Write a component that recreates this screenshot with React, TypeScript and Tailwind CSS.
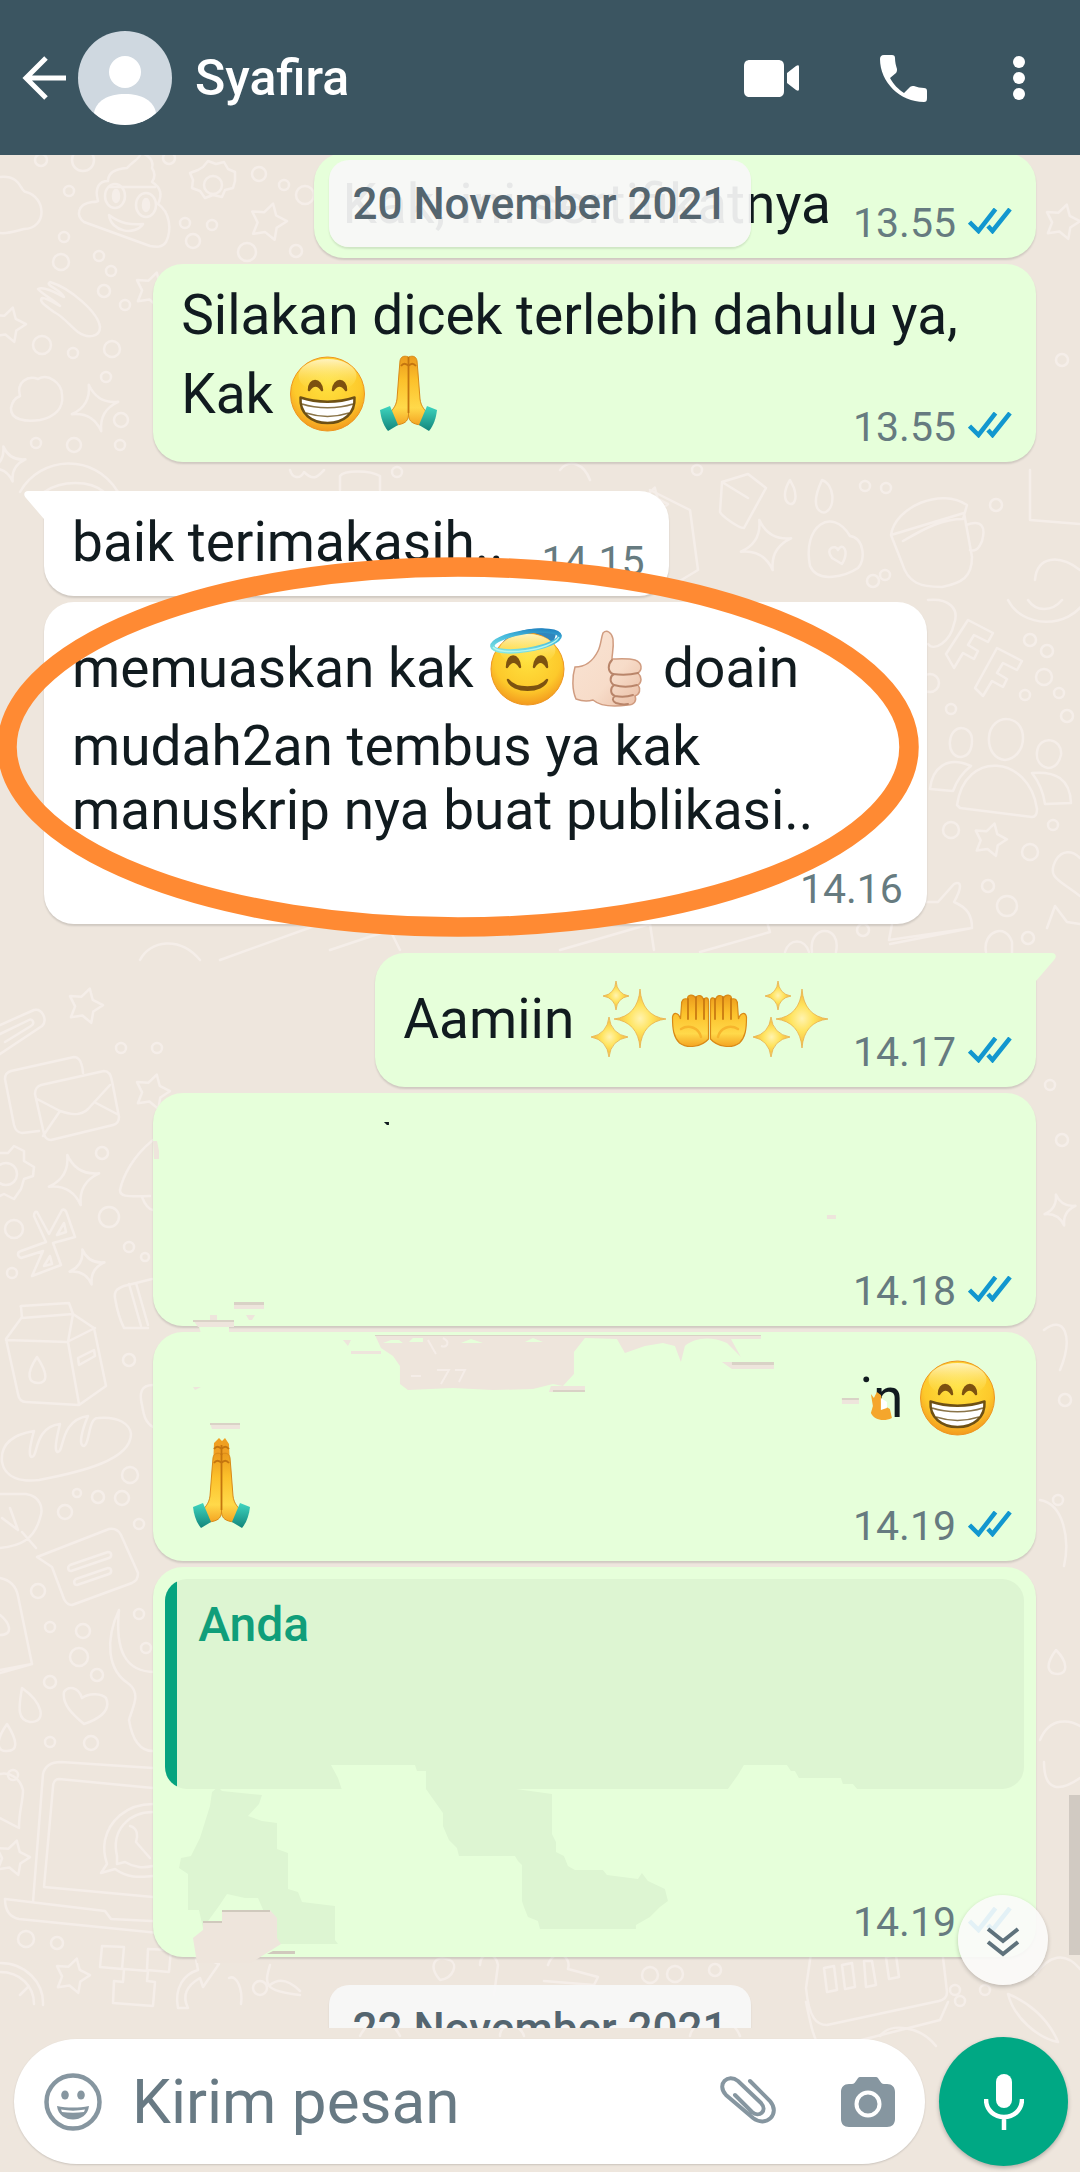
import type { ReactNode } from 'react';

const stars = [
  [268, 222, 19], [8, 325, 18], [85, 1006, 18], [152, 1092, 18], [990, 840, 17], [12, 1858, 18], [72, 1976, 18],
  [152, 290, 18], [1062, 222, 18], [650, 505, 18],
];

const sparkles = [
  [95, 408, 24], [74, 1180, 26], [87, 1267, 18], [766, 545, 26], [8, 464, 18], [905, 1010, 14], [1060, 1210, 16],
];

const circles = [
  [41, 160, 6], [83, 160, 11], [169, 158, 6], [69, 191, 5], [64, 237, 5], [185, 223, 5], [212, 225, 5], [193, 241, 7],
  [259, 174, 7], [284, 185, 5], [305, 195, 9], [247, 252, 9], [296, 251, 6], [61, 262, 8], [99, 256, 5], [111, 271, 5],
  [104, 291, 6], [125, 305, 5], [42, 345, 9], [73, 353, 5], [112, 349, 8], [106, 377, 5], [121, 420, 7], [74, 445, 7],
  [36, 443, 5], [120, 445, 5], [121, 1048, 5], [157, 1048, 5], [102, 1153, 6], [109, 1217, 10], [14, 1229, 9],
  [129, 1247, 5], [145, 1257, 4], [12, 1273, 5], [129, 1360, 6], [130, 1475, 8], [77, 1493, 4], [98, 1497, 6],
  [122, 1498, 7], [65, 1512, 7], [139, 1524, 5], [38, 1591, 7], [50, 1627, 5], [83, 1631, 7], [139, 1614, 5],
  [79, 1657, 9], [97, 1675, 6], [50, 1682, 6], [146, 1648, 5], [50, 1742, 5], [91, 1743, 7], [26, 1939, 8],
  [57, 1943, 6], [260, 1988, 7], [1030, 640, 6], [1047, 651, 6], [1044, 677, 8], [1025, 695, 5], [1059, 693, 5],
  [1067, 716, 6], [951, 709, 5], [930, 683, 9], [951, 830, 8], [1053, 825, 5], [1030, 852, 8], [988, 886, 6],
  [1007, 906, 10], [1028, 938, 6], [863, 930, 6], [397, 472, 5], [697, 470, 5], [865, 486, 5], [886, 488, 5],
  [996, 505, 6], [873, 581, 6], [885, 575, 5], [1062, 1140, 6], [1050, 1085, 5], [1062, 360, 6], [1065, 1400, 6],
  [1058, 1500, 5], [650, 1975, 8], [675, 1974, 8], [715, 1970, 6], [955, 1990, 5], [985, 1990, 5], [960, 2001, 5],
];

const doodles = [
  // cloud and poo
  'M0 177c22-2 20 15 26 15 20 5 22 36-2 37-8 2-16 5-24 4',
  'M127 168c5-6 12-8 14-15 8 2 13 8 11 15 4 6 3 10 0 14 10 6 10 14 6 22 12 8 14 26 8 38-4 6-10 5-16 4l-66-24c-8-6-7-18 8-20 2 0 5 0 6-1-4-14 2-20 10-20 0-8 6-12 19-13zM109 215c12 9 22 10 34 9-8 12-32 8-34-9zM110 187h45',
  // gear
  'M203 167l5-6 8 3 8-2 4 7 7 3v9l-2 7-8 2-3 7-9-2-8 3-5-7-8-3 1-8-3-7 8-3z',
  'M222 185a9 9 0 1 1-18 0 9 9 0 0 1 18 0z',
  // hand
  'M38 289c8-4 24 8 26 8-4-8-20-12-14-15 20 6 48 30 50 45 0 10-12 12-22 5-8-6-14-15-24-20-6-5-16-10-12-14 6 0 14 6 18 8-6-6-18-12-22-17z',
  // flower
  'M20 396c-4-14 8-21 18-17 10-6 24 4 24 16 2 14-8 22-22 25-14 2-30 0-29-12 1-6 4-10 9-12z',
  // dome
  'M20 492c20-36 74-40 98 0M44 492c18-12 46-12 60 0',
  // paperclip and envelopes
  'M0 1025l34-15c8-2 14 10 8 16L0 1054M5 1042l26-16c4-2 2-8-2-6L0 1034',
  'M39 1131l-17 2c-4 0-7-4-8-8l-9-46c0-5 2-7 6-8l63-14c5 0 8 4 9 16',
  'M41 1085l63-14c4 0 7 4 8 10l7 36c0 4-2 7-6 8l-62 15c-4 0-6-2-7-6l-9-40c0-4 2-8 6-9zM37 1099l23 12c14 5 22 4 28-2l22-24M60 1111l-17 25M96 1103l21 11',
  // gear on the edge
  'M0 1153l8 0 6-7 10 5 0 10 10 6-1 9-9 3-3 10-7 10-10-5-4 2M17 1174a11 11 0 1 1-22 0 11 11 0 0 1 22 0',
  // ribbon
  'M37 1212l12 22 13-24c2-1 4 0 5 4l8 23-22 6 8 22-29 11 11-25-22 7c-4-2-4-6 0-7l25-9-12-26c0-4 2-5 3-4zM57 1235l7-12 2 9zM44 1266l6-10 2 8z',
  // rocket
  'M153 1140c-20 16-30 36-33 50 0 6 4 7 30 6M142 1197c3 8 6 12 11 13',
  // milk carton
  'M21 1307c-1-1 0-1 0-1l48-3 4 11-51 4zM22 1317l-16 22 12 55c1 6 4 8 8 8l53 3 27-19-12-58-21-14-5 28 11 62M6 1340l61 2 28-14M78 1358l16-8 1 6-16 9zM37 1357c-12 18-8 26 1 26s11-8-1-26z',
  'M152 1279l-28 7c-8 3-10 6-9 12 2 12 4 20 9 30l24 0M129 1284l12 42M136 1283l12 42M153 1385c-12 0-14 8-11 20 2 12 4 18 11 22',
  // bread
  'M2 1462c-2-20 14-28 32-31-4 14-6 26-2 26 6 0 2-30 28-33-4 16-6 28-2 28 6 0 2-32 30-36-6 14-10 30-4 30 6-2 4-28 14-28 20-2 32 6 33 16 0 26-50 38-92 46-18 2-34-2-37-18z',
  // racket and chat note
  'M0 1494h26c14 2 18 14 14 24-6 22-20 28-40 30M22 1532l14 16M10 1508l8 22M2 1518l16 12',
  'M37 1557l72-28c6-1 10 2 12 6l17 38c0 6-2 8-6 10l-60 22c-4 0-6-2-8-6l-12-32zM70 1565l38-13c4 0 4 5 1 6l-38 13c-3 0-4-4-1-6zM76 1579l32-11c4 0 4 5 1 6l-32 11c-3 0-4-4-1-6z',
  'M0 1578c10 2 16 8 18 18l14 68-32 9M32 1664l-32 6M0 1615c10 8 14 20 0 20',
  // bottle, heart and drops
  'M119 1610c-14 30-12 60 10 74 12 10 4 22 0 36 4 24 14 32 26 31M119 1610c-4 40 6 62 36 62',
  'M84 1724c-12-10-22-20-20-32 4-6 14-6 18 6 8-6 20-4 24 0 6 14-10 22-22 26zM22 1688c-4 22-4 32 8 34 18 0 12-20-8-34zM7 1724c-14 20-8 28 0 27 10 0 12-8 0-27z',
  'M0 1774c10-2 20 4 23 16 0 12-4 20-4 38L0 1818M18 1775a5 5 0 1 1-10 0 5 5 0 0 1 10 0',
  // laptop
  'M153 1768l-92-6c-10 0-16 4-18 12l-10 128M153 1788l-94-9c-4 0-6 4-6 8l-9 100 109 10M5 1899l100 12 6 8 160 8M5 1899c0 10 4 18 14 20l240 24c8 0 12-4 12-16',
  'M153 1804c-28 0-44 18-48 36-2 10 0 18 2 24l-6 9 14-4c14 10 26 8 38 7M153 1812c-24 0-42 18-36 44l0 8 8-2c10 6 18 6 28 4M130 1826c8 2 8 10 6 16l14 16',
  // pixels and arrow
  'M102 1946l22 1-2 22-22-2zM148 1949l23 1-2 22-22-2zM124 1969l24 2-1 10 8 1-2 24-40-3 1-22 9 1zM195 1953l24 11-16 23-3-9c-14 8-18 18-12 30l-10 0c-4-20 6-34 20-38zM229 1978c8-4 14 12 12 26',
  'M0 1963c26 0 44 20 43 42M0 1972c20 0 34 14 34 32M20 1995l8-8',
  // people
  'M972 740c0 10-4 16-11 17-8 0-12-8-11-16 2-18 22-16 22-1zM1023 738c0 12-8 21-18 22-10-1-17-10-16-23 2-24 34-24 34 1zM1061 755c-2 8-6 13-13 13-8-2-12-8-11-16 2-18 26-14 24 3z',
  'M957 805c8-56 72-50 80 4 0 6-2 8-5 8l-72-9zM930 789c2-20 16-34 41-23-8 6-14 14-18 25zM1032 773c24-2 38 6 39 30l-26 1c-2-14-6-22-13-31z',
  // banner and mushroom shapes
  'M946 654l22-34 25 13-5 9-14-7-6 10 10 6-4 8-11-6-9 15zM975 688l22-40 25 13-5 9-14-7-6 10 10 6-4 8-11-6-9 15z',
  'M928 600c20-2 32 8 26 24-4 18-20 28-26 20M1008 600c14 28 60 30 78 0M1028 600c8 12 24 12 34 0',
  // robot and tag
  'M889 940l3-16c6-14 20-20 34-22l12 0 16-18c8-4 8 4 0 18 14 6 18 14 18 26zM890 944l82-16M986 952c-4-20 20-30 26-10v12M1047 928l8-22 12 16 13 2M1056 860c6-10 16-10 24-2M1056 860c-10 18 4 20 24 36',
  'M785 952c4-14 20-14 24 0M812 952c-4-28 30-28 24 0M700 952l70-20-6-20M140 960c10-20 40-24 60 0M220 960l100-36M330 950l60-20 10 20M560 950l90-26 4 26',
  // cups and pills
  'M891 535l73-22 8 44c0 20-10 26-30 30-22 0-34-4-40-24zM891 535c4-28 50-48 76-30l-4 14c-20 0-36 8-60 22M966 525c16-6 20 2 16 16-4 10-8 10-12 9',
  'M810 566c-8-40 22-60 40-30 14 2 16 24 8 32-12 8-40 16-48-2zM832 558c-8-10 4-14 6-8 4-8 12 0 4 14zM722 482l26-8 18 14-22 40c-6 0-22-12-24-16zM722 482l26 16M790 480c-16 26 12 34 4 8zM822 480c-14 30 0 34 4 32 10-6 8-28-4-32z',
  'M650 490l40 20 8 60-40 24M1030 470v50l50 4M1035 580c2-24 24-26 45-10M560 470c10-12 24-6 30 10M340 490v-14c4-6 30-6 40 0v14M290 470c2 8 10 10 14 2 10 10 14 4 20-2',
  'M440 1980c-12-14-6-26 10-20 8 4 4 18-10 20zM480 1965c0-14 16-14 18 0l-4 30M548 1965c6-18 24-10 20 4l30 8-4 8-50-4',
  // clock radio
  'M806 1988l4-28c0-6 6-10 14-12l100-18c8 0 14 4 17 10l6 52c0 6-4 8-8 9l-112 24c-10 0-18-6-21-37zM824 1968l10-2 3 24-10 2zM842 1965l10-2 3 24-10 2zM864 1961h8l4 24-10 2zM886 1957l10-2 3 22-10 2zM806 2002c4 20 8 40 16 48l118-30 8-18',
  'M1008 1994c20 8 40 24 50 48-20-4-44-24-50-48M1035 1975c14-20 30-24 45-6M1044 1330c20-16 30 6 16 40M1040 1500c24 4 30 40 24 66M1056 1650c-12 16-8 24 2 24s10-12-2-24zM1040 1740c10-24 30-20 40-14M1044 1762c0 30 16 30 36 16',
  'M270 1965c-6 20-6 26 30 30M270 1985c12-10 24 0 30 6M360 2036c10-20 30-20 40 0M500 2036c0-14 20-14 24 0M690 2036c4-20 40-26 50 0M880 2036c10-14 40-10 56 10',
];

function starPath(cx: number, cy: number, r: number) {
  const points = Array.from({ length: 10 }, (_, i) => {
    const a = (i * Math.PI) / 5 - 1.3;
    const d = i % 2 ? r * 0.55 : r;
    return `${(cx + d * Math.cos(a)).toFixed(1)} ${(cy + d * Math.sin(a)).toFixed(1)}`;
  });
  return `M${points.join('L')}Z`;
}

function sparkPath(cx: number, cy: number, r: number) {
  const k = r * 0.14;
  return `M${cx} ${cy - r}Q${cx + k} ${cy - k} ${cx + r} ${cy}Q${cx + k} ${cy + k} ${cx} ${cy + r}Q${cx - k} ${cy + k} ${cx - r} ${cy}Q${cx - k} ${cy - k} ${cx} ${cy - r}Z`;
}

function Wallpaper() {
  return (
    <svg
      viewBox="0 0 1080 2172"
      preserveAspectRatio="xMidYMin slice"
      className="absolute inset-0 -z-10 h-full w-full"
      fill="none"
      stroke="#f5eee9"
      strokeWidth="2.5"
      strokeLinejoin="round"
      strokeLinecap="round"
      aria-hidden="true"
    >
      {doodles.map((d) => <path key={d} d={d} />)}
      {circles.map(([x, y, r]) => <circle key={`${x}-${y}`} cx={x} cy={y} r={r} />)}
      {stars.map(([x, y, r]) => <path key={`${x}-${y}`} d={starPath(x, y, r)} />)}
      {sparkles.map(([x, y, r]) => <path key={`${x}-${y}`} d={sparkPath(x, y, r)} transform={`rotate(-15 ${x} ${y})`} />)}
      <ellipse cx="115" cy="196" rx="10" ry="12" />
      <ellipse cx="146" cy="205" rx="10" ry="12" />
      <ellipse cx="116" cy="196" rx="3" ry="6" fill="#f5eee9" />
      <ellipse cx="146" cy="205" rx="3" ry="6" fill="#f5eee9" />
    </svg>
  );
}

function Gradients() {
  return (
    <svg className="absolute h-0 w-0" aria-hidden="true">
      <defs>
        <radialGradient id="face" cx="0.5" cy="0.35" r="0.65">
          <stop offset="0" stopColor="#ffe23f" />
          <stop offset="0.7" stopColor="#fdc92b" />
          <stop offset="1" stopColor="#f39a1e" />
        </radialGradient>
        <linearGradient id="shine" x1="0" y1="0" x2="0" y2="1">
          <stop offset="0" stopColor="#fff6cf" stopOpacity="0.9" />
          <stop offset="1" stopColor="#ffe23f" stopOpacity="0" />
        </linearGradient>
        <linearGradient id="skin" x1="0" y1="0" x2="0" y2="1">
          <stop offset="0" stopColor="#eb9a1c" />
          <stop offset="0.35" stopColor="#fcc12b" />
          <stop offset="0.75" stopColor="#ffd94a" />
          <stop offset="1" stopColor="#f4a422" />
        </linearGradient>
        <linearGradient id="pale" x1="0" y1="0" x2="1" y2="1">
          <stop offset="0" stopColor="#f9e3d3" />
          <stop offset="0.6" stopColor="#f7dcc9" />
          <stop offset="1" stopColor="#e9bda4" />
        </linearGradient>
        <linearGradient id="cuff" x1="0" y1="0" x2="0" y2="1">
          <stop offset="0" stopColor="#3fd6c0" />
          <stop offset="1" stopColor="#13857b" />
        </linearGradient>
        <radialGradient id="spark">
          <stop offset="0" stopColor="#fff3b0" />
          <stop offset="0.45" stopColor="#ffe35c" />
          <stop offset="1" stopColor="#f2b33c" />
        </radialGradient>
        <linearGradient id="halo" x1="0" y1="1" x2="1" y2="0">
          <stop offset="0" stopColor="#8ff0e4" />
          <stop offset="0.6" stopColor="#45b9dc" />
          <stop offset="1" stopColor="#1672b8" />
        </linearGradient>
      </defs>
    </svg>
  );
}

function Emoji({ label, children }: { label: string; children: ReactNode }) {
  return (
    <svg
      viewBox="0 0 81 76"
      role="img"
      aria-label={label}
      className="mt-[9px] mb-2 inline-block h-[76px] w-[81px] overflow-visible align-[-27px]"
    >
      {children}
    </svg>
  );
}

function Grin() {
  return (
    <Emoji label="grinning face">
      <circle cx="40.5" cy="38" r="37" fill="url(#face)" stroke="#ee9620" />
      <ellipse cx="40.5" cy="20" rx="29" ry="17" fill="url(#shine)" />
      <path d="M22 34c0-12 12-12 13 0-4-6-9-6-13 0zM46 34c1-12 13-12 13 0-4-6-9-6-13 0z" fill="#7d5210" stroke="#7d5210" strokeWidth="2.5" strokeLinejoin="round" />
      <path d="M13.5 41.5c16 5.5 38 5.5 54 0 1 16-11 25.5-27 25.5s-28-9.500-27-25.5z" fill="#fff" />
      <path d="M15 48c15 5 36 5 51 0M19 57c14 4.5 29 4.5 43 0" fill="none" stroke="#8a7448" strokeWidth="1.6" />
      <path d="M13.5 41.5c16 5.5 38 5.5 54 0 1 16-11 25.5-27 25.5s-28-9.500-27-25.5z" fill="none" stroke="#6e5014" strokeWidth="2.5" strokeLinejoin="round" />
    </Emoji>
  );
}

function Pray({ tall = false }: { tall?: boolean }) {
  return (
    <Emoji label="folded hands">
      {tall && <path d="M32 14l1-24 5-5 3 3 3-3 4 6 1 23z" fill="#f0a022" />}
      <path d="M40.5 1c-5-2-8 0-8.5 4l-1 12-2 26c-1 8-5 11-9 16l8 10c8-1 12-3 12.5-10z" fill="url(#skin)" stroke="#d98a17" />
      <path d="M40.5 1c5-2 8 0 8.5 4l1 12 2 26c1 8 5 11 9 16l-8 10c-8-1-12-3-12.5-10z" fill="url(#skin)" stroke="#d98a17" />
      <path d="M33 10c2-3 5-3 7.5 0 2.5-3 5-3 7.5 0M40.5 1v56" fill="none" stroke="#c4750f" strokeWidth="1.8" />
      {tall && <path d="M33-4c2-3 5-3 7.5 0 2.5-3 5-3 7.5 0M40.5-8v10" fill="none" stroke="#c4750f" strokeWidth="1.8" />}
      <path d="M12 54l10-4 8 19-10 6c-5-6-7-13-8-21z" fill="url(#cuff)" />
      <path d="M69 54l-10-4-8 19 10 6c5-6 7-13 8-21z" fill="url(#cuff)" />
    </Emoji>
  );
}

function Halo() {
  return (
    <Emoji label="smiling face with halo">
      <path d="M16 12C26-2 60-6 69 4L66 14 18 22z" fill="#2f86bd" />
      <ellipse cx="40.5" cy="39" rx="36.5" ry="36" fill="url(#face)" stroke="#ee9620" />
      <ellipse cx="40.5" cy="20" rx="28" ry="16" fill="url(#shine)" />
      <path d="M20 37c0-14 12-14 13 0-4-7-9-7-13 0zM47 37c1-14 13-14 13 0-4-7-9-7-13 0z" fill="#7d5210" stroke="#7d5210" strokeWidth="2.5" strokeLinejoin="round" />
      <path d="M21 50c8 10 31 10 39 0-4 13-35 13-39 0z" fill="#7d5210" stroke="#7d5210" strokeWidth="2.5" strokeLinejoin="round" />
      <ellipse cx="39" cy="11" rx="34" ry="9" fill="none" stroke="url(#halo)" strokeWidth="4.5" transform="rotate(-9 39 11)" />
      <path d="M6 17c6 9 58 4 66-10" fill="none" stroke="#b5f5ee" strokeWidth="1.5" />
    </Emoji>
  );
}

function ThumbsUp() {
  return (
    <Emoji label="thumbs up">
      <path d="M7 37c10 0 18-6 23-16 3-6 3-13 5-18 4-4 9 0 10 6 1 9-1 15-1 20 5 0 16-1 23 1 8 3 7 10 3 13 4 4 4 9 0 12 3 4 2 9-3 11 2 5-1 9-7 9-14 2-28 1-35-5-6 2-12 1-17-1-4-9-4-22-1-32z" fill="url(#pale)" stroke="#d09c80" strokeWidth="1.5" />
      <path d="M70 43c-8 2-18 2-25 1-6-3-5-10-1-14M69 55c-7 2-16 2-23 0-5-3-4-9 0-11M65 65c-6 2-12 2-18 1-5-2-5-8-1-11M60 74c-5 1-9 0-12-1-4-2-4-5-1-7" fill="none" stroke="#b9856a" strokeWidth="2" strokeLinecap="round" />
    </Emoji>
  );
}

function Sparkles() {
  return (
    <Emoji label="sparkles">
      <g fill="url(#spark)" stroke="#eab04a" strokeWidth="0.8">
        <path d="M52 8q2 27 26 30-24 3-26 29-2-26-26-29 24-3 26-30z" />
        <path d="M28 0q1 13 13 15-12 2-13 14-1-12-13-14 12-2 13-15z" />
        <path d="M21 36q2 17 19 20-17 3-19 20-2-17-18-20 16-3 18-20z" />
      </g>
    </Emoji>
  );
}

function Palms() {
  const hand = 'M39.5 28v-8c0-4-4-4-5-1-1-5-6-6-8-2-2-4-8-4-8 1-4-1-6 1-6 6l-1 14c-2-7-7-7-8-2 0 12 1 20 7 26 8 6 22 4 29-4z';
  return (
    <Emoji label="palms up together">
      <g stroke="#d98a17" strokeWidth="1.2">
        <path d={hand} fill="url(#skin)" />
        <path d={hand} fill="url(#skin)" transform="matrix(-1 0 0 1 81 0)" />
      </g>
      <path d="M19 18v20M27 16v22M35 18v20M46 18v20M54 16v22M62 18v20" fill="none" stroke="#c97a12" strokeWidth="1.8" strokeLinecap="round" />
      <path d="M12 48c8-5 18-1 20 8M69 48c-8-5-18-1-20 8" fill="none" stroke="#f7b52c" strokeWidth="2.5" strokeLinecap="round" />
    </Emoji>
  );
}

function Ticks() {
  return (
    <svg viewBox="0 0 44 26" className="mt-[9px] h-[26px] w-11" fill="none" stroke="#1297cf" strokeWidth="4.5" aria-label="dibaca">
      <path d="M1.5 14l9 9L27.500 1M20 18l4.500 5L42 1" />
    </svg>
  );
}

type BubbleProps = {
  time: string;
  out?: boolean;
  tail?: boolean;
  // wide bubbles put the time on top of the text area's last line
  wide?: boolean;
  className?: string;
  overlay?: ReactNode;
  children?: ReactNode;
};

function Bubble({ time, out, tail, wide, className = '', overlay, children }: BubbleProps) {
  const side = out ? 'self-end bg-[#e6ffda]' : 'self-start bg-white';
  const corner = tail ? (out ? 'rounded-tr-none' : 'rounded-tl-none') : '';
  const columns = wide ? 'w-[89%] grid-cols-1' : `grid-cols-[auto_auto] ${out ? 'gap-x-[22px]' : 'gap-x-6'}`;
  return (
    <article
      className={`relative grid shrink-0 rounded-[30px] shadow-[0_2px_2px_rgba(0,0,0,0.13)] ${side} ${corner} ${columns} ${className}`}
    >
      {tail && !out && (
        <svg viewBox="0 0 22 30" className="absolute top-0 -left-5 h-[30px] w-[22px]" fill="#fff" aria-hidden="true">
          <path d="M22 0H4C0 0-1 4 2 7l18 21h2z" />
        </svg>
      )}
      {tail && out && (
        <svg viewBox="0 0 22 30" className="absolute top-0 -right-5 h-[30px] w-[22px]" fill="#e6ffda" aria-hidden="true">
          <path d="M0 0h18c4 0 5 4 2 7L2 28H0z" />
        </svg>
      )}
      <div className={wide ? 'col-start-1 row-start-1' : ''}>{children}</div>
      {overlay}
      <div
        className={`flex self-end justify-self-end pr-6 pb-[11px] text-[41px] leading-[48px] text-[#667b80] ${wide ? 'col-start-1 row-start-1' : ''}`}
      >
        <time>{time}</time>
        {out && <span className="ml-3"><Ticks /></span>}
      </div>
    </article>
  );
}

function DatePill({ children }: { children: ReactNode }) {
  return (
    <div className="rounded-[20px] bg-[#f8f8f7]/93 px-[23px] pt-[13px] pb-[11px] text-[44px] leading-[63px] font-medium text-[#54656f] shadow-[0_2px_2px_rgba(0,0,0,0.1)]">
      {children}
    </div>
  );
}

function Header() {
  return (
    <header className="z-20 flex shrink-0 items-center bg-[#3b5561] pt-[31px] pr-[55px] pb-[30px] pl-[22px] text-white">
      <button aria-label="Kembali">
        <svg viewBox="0 0 44 44" className="h-11 w-11" fill="none" stroke="currentColor" strokeWidth="5">
          <path d="M44 22H5M24 2L4 22l20 20" />
        </svg>
      </button>
      <svg viewBox="0 0 94 94" className="ml-3 h-[94px] w-[94px]" aria-hidden="true">
        <clipPath id="avatar"><circle cx="47" cy="47" r="47" /></clipPath>
        <g clipPath="url(#avatar)">
          <path d="M0 0h94v94H0z" fill="#cfd8e0" />
          <circle cx="47" cy="41" r="16" fill="#fff" />
          <path d="M16 82c2-12 14-19 31-19s29 7 31 19c-8 8-18 12-31 12s-23-4-31-12z" fill="#fff" />
        </g>
      </svg>
      <h1 className="ml-[23px] flex-1 text-[50px] leading-[60px] font-medium">Syafira</h1>
      <button aria-label="Panggilan video">
        <svg viewBox="0 0 56 37" className="h-[37px] w-14" fill="currentColor">
          <path d="M6 0h28c4 0 6 2 6 6v25c0 4-2 6-6 6H6c-4 0-6-2-6-6V6c0-4 2-6 6-6zM43 13l9-7c2-1 3-1 3 1v22c0 2-1 2-3 1l-9-7z" />
        </svg>
      </button>
      <button className="ml-20" aria-label="Panggilan suara">
        <svg viewBox="0 0 47 47" className="h-[47px] w-[47px]" fill="currentColor">
          <path d="M4 0h8c2 0 3 1 3 3 0 4 1 8 2 11 0 1 0 3-1 4l-6 5c4 7 8 11 14 15l6-6c1-1 2-1 4-1 3 1 7 2 10 2 2 0 3 1 3 3v7c0 3-1 4-3 4C20 47 0 27 0 4c0-2 1-4 4-4z" />
        </svg>
      </button>
      <button className="ml-[86px]" aria-label="Menu">
        <svg viewBox="0 0 12 44" className="h-11 w-3" fill="currentColor">
          <circle cx="6" cy="6" r="6" />
          <circle cx="6" cy="22" r="6" />
          <circle cx="6" cy="38" r="6" />
        </svg>
      </button>
    </header>
  );
}

function Composer() {
  return (
    <footer className="flex shrink-0 items-center gap-3.5 pt-[9px] pr-3 pb-1.5 pl-3.5">
      <div className="flex h-[125px] min-w-0 flex-1 items-center rounded-full bg-white px-[30px] text-[#8696a0] shadow-[0_1px_2px_rgba(0,0,0,0.15)]">
        <button aria-label="Emoji">
          <svg viewBox="0 0 58 58" className="h-[58px] w-[58px]" fill="currentColor">
            <circle cx="29" cy="29" r="26.5" fill="none" stroke="currentColor" strokeWidth="4.5" />
            <ellipse cx="21" cy="22" rx="3.8" ry="4.5" />
            <ellipse cx="37" cy="22" rx="3.8" ry="4.5" />
            <path d="M13 33c10 2 22 2 32 0-2 18-30 18-32 0z" />
            <path d="M17 36.5c8 1.5 16 1.5 24 0l-1 2.5c-7 1-15 1-22 0z" fill="#fff" />
          </svg>
        </button>
        <input
          type="text"
          aria-label="Kirim pesan"
          placeholder="Kirim pesan"
          className="ml-[30px] min-w-0 flex-1 bg-transparent text-[62px] leading-[74px] text-[#111b21] outline-none placeholder:text-[#687a84]"
        />
        <button aria-label="Lampirkan">
          <svg viewBox="0 0 58 52" className="h-[52px] w-[58px]" fill="none" stroke="currentColor" strokeWidth="4" strokeLinecap="round">
            <path d="M31 5l20 20c11 13-4 27-17 17L7 19C-3 8 9-3 19 5l23 22c7 8-2 15-9 9L16 19" />
          </svg>
        </button>
        <button className="ml-16" aria-label="Kamera">
          <svg viewBox="0 0 54 50" className="h-[50px] w-[54px]" fill="currentColor">
            <path d="M19 0h16c3 0 4 7 8 7h3c5 0 8 3 8 8v27c0 5-3 8-8 8H8c-5 0-8-3-8-8V15c0-5 3-8 8-8h3c4 0 5-7 8-7z" />
            <circle cx="27" cy="27" r="11.5" fill="none" stroke="#fff" strokeWidth="4" />
          </svg>
        </button>
      </div>
      <button
        className="flex h-[129px] w-[129px] shrink-0 items-center justify-center rounded-full bg-[#00a884] text-white shadow-[0_2px_4px_rgba(0,0,0,0.25)]"
        aria-label="Pesan suara"
      >
        <svg viewBox="0 0 40 56" className="h-14 w-10" fill="none" stroke="currentColor">
          <path d="M20 8v18" strokeWidth="16" strokeLinecap="round" />
          <path d="M2 25c0 24 36 24 36 0M20 43v13" strokeWidth="4.5" />
        </svg>
      </button>
    </footer>
  );
}

export default function App() {
  return (
    <div className="relative isolate flex h-screen flex-col overflow-hidden bg-[#eee6dd] font-[Roboto,sans-serif]">
      <Wallpaper />
      <Gradients />
      <Header />
      <main className="relative min-h-0 flex-1 overflow-hidden">
        <div className="-mt-0.5 flex flex-col gap-1.5 px-11 text-[55px] leading-[64px] text-[#111b1f]">
          <Bubble out time="13.55">
            <p className="pt-[19px] pb-[22px] pl-7">Kak, ini sertifikatnya</p>
          </Bubble>
          <Bubble out wide time="13.55">
            <p className="px-7 pt-[19px] pb-[22px]">
              Silakan dicek terlebih dahulu ya, Kak <Grin /><Pray />
            </p>
          </Bubble>
          <Bubble tail time="14.15" className="mt-[23px]">
            <p className="pt-[19px] pb-[22px] pl-7">baik terimakasih..&nbsp;</p>
          </Bubble>
          <Bubble wide time="14.16">
            <p className="px-7 pt-[19px] pb-[82px]">
              memuaskan kak <Halo /><ThumbsUp /> doain mudah2an tembus ya kak manuskrip nya buat publikasi..
            </p>
          </Bubble>
          <Bubble out tail time="14.17" className="mt-[23px]">
            <p className="pt-[19px] pb-[22px] pl-7">Aamiin <Sparkles /><Palms /><Sparkles /></p>
          </Bubble>
          <Bubble
            out
            wide
            time="14.18"
            overlay={
              <svg viewBox="0 0 883 233" className="absolute top-0 left-0 h-[233px] w-full overflow-visible" fill="#eee5dc" aria-hidden="true">
                <path d="M231 29h5v3h-2z" fill="#111b1f" />
                <path d="M674 122h9v4h-9zM0 48h4l2 10v8H1z" />
                <path d="M81 209h30v7H81zM93 222h9l-3 5h-3zM57 222h7v5h17v7H45l-5-7h17z" />
                <path d="M81 209h30v3H81zM40 227h41v2H40z" fill="#d9d2c6" />
                <path d="M46 234h30v6H48z" fill="#e6ffda" />
              </svg>
            }
          >
            <div className="h-[233px]" />
          </Bubble>
          <Bubble
            out
            wide
            time="14.19"
            overlay={
              <svg viewBox="0 0 883 229" className="absolute top-0 left-0 h-[229px] w-full" fill="#eee5dc" aria-hidden="true">
                <path d="M222 3h386v4h-30l10 18-14-14c-18-8-34-4-42 3l-4 16-6-16-12-3-18 3-20 7-8-14-32-1-11 14v22l-11 12-10-2-20 5-40 1-40-2-45 2-8-6V34l-7-10-12-8zM190 8h8l-3 6zM198 19h30v3h-30z" />
                <path d="M398 54h34v6h-36zM569 30h52v7h-42zM689 66h20v6h-20zM57 91h30v6H59zM40 55h8l-6 3z" />
                <path d="M579 30h42v3h-42zM400 58h32v2h-32zM57 91h30v2H57zM689 66h20v2h-20zM222 3h386v1H222z" fill="#d9d2c6" />
                <path d="M238 8h8l4 3h-20zM260 6h10v4h-14zM308 11l10-4 12 4zM372 10l8-4 10 4z" fill="#e6ffda" />
                <path d="M275 8l8 14M290 6c8 4 4 10-2 8M258 44h10M284 38h12l-8 14M302 38h10l-6 12" fill="none" stroke="#f5ede8" strokeWidth="2" />
                <path d="M706 56h15l4 8v24h-19z" fill="#e6ffda" />
                <path d="M718 62l3 4 3-6 4 3 2 10 7 4 2 9c-8 4-18 2-21-5l2-7z" fill="#f5a62c" />
                <path d="M728 66l6 4v6l-6 2z" fill="#fff" />
              </svg>
            }
          >
            <div className="px-7 pt-[19px] pb-6">
              <p className="pr-2.5 text-right">in <Grin /></p>
              <p><Pray tall /></p>
            </div>
          </Bubble>
          <Bubble
            out
            wide
            time="14.19"
            overlay={
              <svg viewBox="0 0 883 396" className="absolute top-0 left-0 h-[396px] w-full" fill="#ddf5d2" aria-hidden="true">
                <path d="M178 198h84l2 6h9v19h-84l-4-12zM575 222l10-14 6-10h43l4 6h4l4 7h42l2 6h10l5 6z" fill="#e6ffda" />
                <path d="M273 222h90l36 5v40l4 8v10l8 4 4 10 7 4h28l4 5 31 4 4-6 6 8 17 8 3 12-8 6-10 10-14 8v4h-96l-2-8-10-4-4-10-2-6v-36l-4-4-3-5h-56l-2-8-8-8-6-14V246z" />
                <path d="M69 224l40 4-3 9-11 12 14 5 15 2v26l11 4v36l10 3 4 10 33 4v34l3 4h-60l-20-46H92l-18-4-8 12-16 22-4-18H35v-36l-9-6 2-10 10-2 9-18 10-32 2-14 6-5z" />
                <path d="M69 343h48l7 8v20l4 6-30 19H44l-4-25 10-8v-8h19z" fill="#eee5dc" />
                <path d="M69 343h48v2H69zM50 354h19v2H50zM120 384h22v3h-28z" fill="#d0c9bd" />
              </svg>
            }
          >
            <div className="pb-[168px]">
              <blockquote className="mx-3 mt-3 flex h-[210px] overflow-hidden rounded-[22px] bg-[#ddf5d2]">
                <span className="w-3 bg-[#06a37f]" />
                <p className="pt-[17px] pl-[21px] text-[48px] leading-[58px] font-medium text-[#109e7a]">Anda</p>
              </blockquote>
            </div>
          </Bubble>
          <div className="mt-[22px] self-center">
            <DatePill>22 November 2021</DatePill>
          </div>
        </div>

        <div className="absolute inset-x-0 top-[5px] flex justify-center">
          <DatePill>20 November 2021</DatePill>
        </div>
        <svg viewBox="0 0 920 382" className="absolute top-[401px] left-0 h-[382px] w-[920px] overflow-visible" fill="none" aria-hidden="true">
          <ellipse cx="458" cy="191" rx="451" ry="180" stroke="#ff8a33" strokeWidth="19.5" />
        </svg>
        <button
          className="absolute right-8 bottom-[43px] flex h-[90px] w-[90px] items-center justify-center rounded-full bg-[#fbfbfa]/90 text-[#5f727c] shadow-[0_2px_4px_rgba(0,0,0,0.2)]"
          aria-label="Gulir ke bawah"
        >
          <svg viewBox="0 0 34 30" className="mt-1 h-[30px] w-[34px]" fill="none" stroke="currentColor" strokeWidth="4">
            <path d="M2 2l15 12L32 2M2 15l15 12 15-12" />
          </svg>
        </button>
        <div className="absolute right-0 bottom-[73px] h-40 w-[11px] bg-black/12" />
      </main>
      <Composer />
    </div>
  );
}
